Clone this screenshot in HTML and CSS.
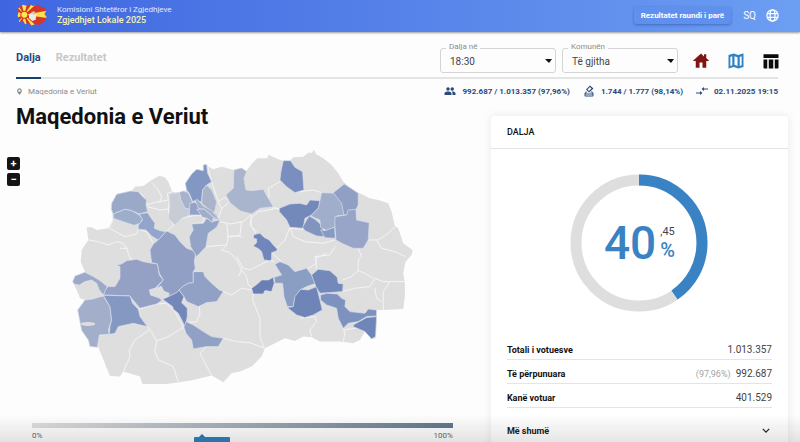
FILE: index.html
```html
<!DOCTYPE html>
<html lang="sq">
<head>
<meta charset="utf-8">
<meta name="viewport" content="width=device-width, initial-scale=1">
<title>Zgjedhjet Lokale 2025</title>
<link rel="stylesheet" href="styles.css">
</head>
<body>
<header class="topbar">
  <svg class="logo" viewBox="0 0 90 66" aria-hidden="true">
    <defs><clipPath id="blob"><path d="M8 8 18 2 29 5 38 1 48 6 61 2 72 9 83 13 87 23 82 30 89 38 85 49 75 57 67 63 55 60 43 65 35 58 24 61 20 52 6 55 7 43 1 36 5 24 2 16Z"/></clipPath></defs>
    <g clip-path="url(#blob)">
      <path fill="#d9342b" d="M0 0h90v66H0z"/>
      <path fill="#f8e34b" d="M22 32 0 22v20zM22 32 14 0H30zM22 32 14 66H30zM22 32 0 0v9zM22 32 0 66v-9zM22 32 44 0h14zM22 32 44 66h14zM22 32 90 20v22z"/>
      <circle cx="22" cy="32" r="12" fill="#d9342b"/><circle cx="22" cy="32" r="9" fill="#fae94d"/>
      <path fill="#d9342b" d="m67 2 18 12-8 4-18-9zM62 52l19-10 5 8-20 12z"/>
    </g>
    <path fill="#eceae5" d="m36 31 13-6 9 6-2 16-10 4-10-9z"/>
    <path fill="#e7bb91" d="m42 25 9-4 6 8-7 3z"/>
  </svg>
  <div class="brand"><span>Komisioni Shtetëror i Zgjedhjeve</span><strong>Zgjedhjet Lokale 2025</strong></div>
  <button class="round" type="button">Rezultatet raundi i parë</button>
  <button class="lang" type="button">SQ
    <svg viewBox="0 0 24 24" fill="none" stroke="currentColor" stroke-width="2" aria-hidden="true"><circle cx="12" cy="12" r="9"/><ellipse cx="12" cy="12" rx="4" ry="9"/><path d="M4 9h16M4 15h16"/></svg>
  </button>
</header>
<main>
  <div class="toolbar">
    <nav class="tabs"><a class="tab active" href="#dalja">Dalja</a><a class="tab" href="#rezultatet">Rezultatet</a></nav>
    <div class="filters">
      <div class="field"><label for="time">Dalja në</label><select id="time"><option>18:30</option></select><svg viewBox="0 0 10 5" aria-hidden="true"><path d="M2 0h7L6 4z"/></svg></div>
      <div class="field"><label for="town">Komunën</label><select id="town"><option>Të gjitha</option></select><svg viewBox="0 0 10 5" aria-hidden="true"><path d="M2 0h7L6 4z"/></svg></div>
      <div class="views">
        <a class="home" href="#home" aria-label="Ballina"><svg viewBox="0 0 24 24"><path d="M10 21v-7h4v7h5v-9h4L19 8V3h-3v3L12 2 1 12h4v9z"/></svg></a>
        <a class="map-link" href="#map" aria-label="Harta"><svg viewBox="0 0 24 24"><path fill-rule="evenodd" d="M21 2 15 4 9 2 2 4v18l7-2 6 2 7-2V2zM7 17.500l-2.500 1V6.500l2.500-1zm7 1L10 17V5.500L14 7zm5.500-1-2.500 1V6.500l2.500-1z"/></svg></a>
        <a class="table-link" href="#table" aria-label="Tabela"><svg viewBox="0 0 24 24"><path d="M2 3h20v5H2zM2 10h5v12H3q-1 0-1-1zM9 10h6v12H9zM17 10h5v11q0 1-1 1h-4z"/></svg></a>
      </div>
    </div>
  </div>
  <div class="status">
    <span class="place"><svg viewBox="0 0 24 24" aria-hidden="true"><path fill-rule="evenodd" d="M12 1C7.500 1 4 4.500 4 9c0 6 8 14 8 14s8-8 8-14c0-4.500-3.500-8-8-8zm0 4a4 4 0 1 1 0 8 4 4 0 0 1 0-8z"/></svg>Maqedonia e Veriut</span>
    <span class="stat"><svg viewBox="0 0 24 24" aria-hidden="true"><circle cx="8" cy="8" r="3.500"/><circle cx="16.500" cy="8" r="3.500"/><path d="M1 20v-3c0-3 4-4 7-4s7 1 7 4v3zM17 20v-3c0-2-.7-3-2-4 4-.2 8 1 8 4v3z"/></svg>992.687 / 1.013.357 (97,96%)</span>
    <span class="stat"><svg viewBox="0 0 24 24" aria-hidden="true"><path fill-rule="evenodd" d="M18 13h-1.500l-2 2h3l1.700 2H4.800l1.800-2h2L7 13H6l-3 3.500V21q0 2 2 2h14q2 0 2-2v-4.500zM14 1l7 6-9 8-6-6zm0 3L9 9l3 3 5-5zM5 19h14v2H5z"/></svg>1.744 / 1.777 (98,14%)</span>
    <span class="stat"><svg viewBox="0 0 24 24" aria-hidden="true"><path d="M8 12l5 4-5 4v-3H0v-2h8zM16 4v3h8v2h-8v3l-5-4z"/></svg>02.11.2025 19:15</span>
  </div>
  <div class="content">
    <section class="map-panel">
      <h1>Maqedonia e Veriut</h1>
      <div class="zoom"><button type="button" aria-label="Zmadho">+</button><button type="button" aria-label="Zvogëlo">−</button></div>
      <svg class="map" viewBox="-84 0 1263 750" role="img" aria-label="Harta e komunave">
        <path class="land" d="M80 262 95 262 110 270 145 265 158 240 158 228 154 208 155 190 170 163 180 160 213 155 225 140 250 138 275 120 298 107 315 112 325 125 337 155 350 158 370 153 380 150 376 130 395 102 410 88 430 92 430 75 440 73 445 80 460 88 485 80 510 87 522 90 545 84 560 92 575 72 592 55 622 55 625 44 655 58 670 62 690 62 700 52 730 50 745 38 756 38 762 29 768 42 790 55 815 75 835 100 850 125 870 142 896 158 930 175 955 180 985 190 995 215 1005 258 1015 265 1030 310 1058 330 1055 345 1037 365 1030 400 1035 430 1035 470 1030 507 970 510 950 510 950 545 947 595 935 597 915 575 900 600 880 610 840 605 780 605 755 592 730 590 705 603 675 595 615 625 605 650 575 680 540 695 515 700 490 727 455 707 400 720 355 728 320 732 247 732 240 710 190 695 180 710 150 708 115 622 90 620 85 600 65 572 53 510 75 480 60 475 52 455 38 425 45 408 75 395 62 365 65 330 85 300z"/>
        <g class="borders">
          <path d="M213 155 240 157 258 180 262 195 285 187 300 185 305 170 295 150 275 128M300 185 325 180 322 160 337 155M262 200 300 210 325 207 328 180M325 207 328 235 342 255 320 273M342 255 365 235 400 227 430 227 432 248 395 252M85 300 115 305 145 315 170 305 190 310 200 325 210 355 235 365M158 240 148 265 195 290 230 282 235 268M235 268 260 275 280 310M180 325 205 325"/>
          <path d="M443 80 455 125 475 185 495 172 510 185M523 92 525 120 520 145M475 185 485 205 475 235M485 205 510 185M480 245 510 252 550 245 575 222M500 250 505 290 500 315 438 320M500 290 520 287 545 290M500 315 485 330 510 338 530 360 545 390 535 410M408 335 438 320M575 225 570 255 590 275M545 245 540 285 510 292M635 205 658 205M625 145 660 125M625 145 628 165 620 185M705 157 760 150 785 158M658 210 640 200M640 208 595 215 573 235 575 260 588 282M690 262 675 300 650 325M692 265 700 290 735 305 790 310 825 300M692 265 730 268"/>
          <path d="M635 338 665 365M530 350 550 385 570 390 630 360M545 390 560 410 565 435 580 445M580 462 578 480 600 535 600 590 613 625M490 455 515 465 545 445 575 450M490 595 530 605 570 608 613 625M235 508 265 500 290 492 320 490 345 515 370 562 325 590 290 603 270 568 262 560M268 570 225 600 208 630 210 650 190 695M290 603 285 635 295 660 340 680 355 728M370 562 378 580M440 620 420 640 430 660 455 707M378 485 400 485 418 500 420 520 410 545 385 548M148 583 118 585M720 535 765 530 770 545 750 570 755 590M850 565 855 580 850 605M888 565 850 570M645 365 620 360M740 385 745 410M745 385 770 370 765 350 810 345 825 320M770 388 768 355 800 340M848 420 875 410 895 392 895 360 905 350 895 325M848 455 885 445 930 440 945 415 970 425 990 425M895 392 915 400 940 415M990 425 970 455 970 510M925 300 955 300 985 280 1005 260M950 300 965 325 1005 335 1037 350M990 425 1035 425M945 445 950 475 965 485M400 395 430 395M270 450 300 440 322 460"/>
        </g>
        <g class="regions">
          <path fill="#9ba9c8" d="M155 190 170 163 182 160 212 153 235 155 250 172 260 180 258 195 263 215 238 222 215 212 195 208 160 222 154 208z"/>
          <path fill="#9daeca" d="M160 222 195 208 215 212 238 225 248 238 240 250 222 256 190 245 160 235z"/>
          <path fill="#94a5cb" d="M238 222 263 218 272 232 285 250 283 265 300 272 318 275 295 300 275 288 258 270 235 268 235 256 248 240z"/>
          <path fill="#919fc5" d="M295 300 320 273 345 285 360 305 380 325 408 335 403 365 406 385 400 395 400 428 385 430 368 440 353 458 327 470 322 460 290 445 310 420 298 400 292 372 275 368 270 330 280 312z"/>
          <path fill="#94a1c5" d="M170 375 185 372 200 362 230 358 250 365 275 370 292 372 298 405 310 420 285 445 268 450 272 465 300 475 305 482 290 492 240 505 215 475 210 468 130 465 135 450 145 440 165 440 180 415 180 380z"/>
          <path class="plain" d="M270 449 290 446 304 438 312 454 328 460 326 467 305 475 282 467 272 465z"/>
          <path fill="#9baac8" d="M38 425 45 408 75 397 100 410 120 422 142 440 130 465 118 450 110 430 95 420 75 425 58 435 42 432z"/>
          <path fill="#a3afca" d="M75 480 95 478 130 468 150 500 155 540 145 570 148 583 118 585 112 622 90 620 85 600 65 572 53 510z"/>
          <path fill="#8498c2" d="M130 466 210 468 218 490 235 508 240 530 262 560 220 550 175 560 165 580 148 583 150 560 155 540 150 500z"/>
          <path fill="#7387b9" d="M308 478 330 468 352 457 357 450 372 470 365 488 382 505 382 530 375 562 368 545 355 520 340 508 338 500z"/>
          <path fill="#90a1c5" d="M400 395 430 395 435 410 455 430 478 450 490 455 480 470 470 485 440 488 415 500 380 485 372 470 357 450 370 438 385 430 400 428z"/>
          <path fill="#90a1c5" d="M378 545 400 555 430 575 455 590 490 595 475 620 440 620 400 627 395 600 378 580 372 562z"/>
          <path fill="#8397c3" d="M376 130 395 102 410 88 430 92 430 75 440 73 443 100 455 125 440 135 428 150 425 185 405 182 398 185 388 160 380 150z"/>
          <path fill="#c7ccd5" d="M328 162 358 157 362 175 375 205 390 207 388 225 365 235 345 255 325 235 330 200z"/>
          <path fill="#a8b3cb" d="M358 157 370 153 385 158 397 185 390 207 375 205 362 178z"/>
          <path fill="#a9b4ca" d="M440 135 455 150 470 185 465 210 460 220 425 190 428 150z"/>
          <path fill="#93a2c6" d="M390 190 405 187 415 193 440 205 470 225 478 240 460 235 430 225 388 225z"/>
          <path fill="#a4b1cb" d="M405 182 412 178 430 198 455 212 477 237 463 232 435 208 415 205 410 190z"/>
          <path fill="#93a4c7" d="M395 252 430 250 440 235 455 245 480 240 470 262 445 280 438 320 410 350 392 320 388 290 400 270z"/>
          <path fill="#a1aeca" d="M410 208 433 208 460 232 457 248 442 235 428 232z"/>
          <path fill="#a8b5cc" d="M522 90 545 84 560 95 552 115 558 150 580 152 610 148 625 175 640 200 600 205 575 222 540 212 510 188 498 165 520 145z"/>
          <path fill="#7a8fbf" d="M670 62 692 62 705 82 728 95 732 150 705 158 680 140 660 120 663 95z"/>
          <path fill="#7389ba" d="M658 205 690 192 720 190 740 195 750 180 780 182 780 200 755 225 735 235 730 265 690 262 680 240 658 215z"/>
          <path fill="#8094bf" d="M748 228 765 238 785 255 795 290 770 288 735 272 728 262 740 240z"/>
          <path fill="#a0aecb" d="M785 158 830 160 845 185 855 225 830 228 825 262 800 272 782 262 780 240 752 228 775 205z"/>
          <path fill="#909fc4" d="M820 158 853 132 895 160 895 195 888 210 865 225 852 225 845 190z"/>
          <path fill="#98a5c8" d="M825 230 860 225 865 210 888 208 890 240 928 248 925 300 910 325 880 325 850 312 828 300 825 260z"/>
          <path fill="#869ac3" d="M782 270 795 272 824 262 826 295 795 293z"/>
          <path fill="#7187bc" d="M582 284 600 280 612 292 628 300 640 315 652 327 650 333 635 338 635 358 630 362 612 360 605 335 598 328 580 318 590 308 590 297 580 295z"/>
          <path fill="#6a80b5" d="M575 445 595 430 605 420 625 420 640 412 643 430 635 455 615 452 610 462 580 462z"/>
          <path fill="#8a9dc3" d="M645 373 660 365 685 375 705 395 740 385 755 405 768 430 740 440 720 450 705 475 700 500 682 500 672 470 668 430 645 430 643 412 665 405z"/>
          <path fill="#6f85b8" d="M682 503 700 500 705 470 722 448 745 450 770 440 780 480 787 510 760 525 735 533 710 525z"/>
          <path fill="#7389ba" d="M755 405 775 388 810 392 832 412 835 430 850 432 848 455 780 460 768 440z"/>
          <path fill="#7d92bf" d="M782 465 800 460 832 462 845 475 857 480 855 500 870 515 915 520 925 507 950 510 950 528 920 530 895 545 865 550 850 565 835 535 830 505 800 495 782 480z"/>
          <path fill="#6f86b9" d="M880 555 920 533 950 530 947 590 935 597 915 575 880 560z"/>
        </g>
        <ellipse class="lake" cx="84" cy="552" rx="22" ry="6"/>
      </svg>
      <div class="scale"><div class="bar"></div><span>0%</span><span>100%</span><div class="marker" style="left:40.45%">40.45%</div></div>
    </section>
    <section class="card">
      <h2>DALJA</h2>
      <div class="chart">
        <svg viewBox="0 0 138 138" aria-hidden="true"><circle class="track" cx="69" cy="69" r="63"/><circle class="value" cx="69" cy="69" r="63" pathLength="100" transform="rotate(-90 69 69)"/></svg>
        <div class="percent"><b>40</b><div><small>,45</small><i>%</i></div></div>
      </div>
      <dl>
        <div><dt>Totali i votuesve</dt><dd>1.013.357</dd></div>
        <div><dt>Të përpunuara</dt><dd><em>(97,96%)</em>992.687</dd></div>
        <div><dt>Kanë votuar</dt><dd>401.529</dd></div>
      </dl>
      <button class="more" type="button">Më shumë<svg viewBox="0 0 10 6" fill="none" stroke="currentColor" stroke-width="1.500" aria-hidden="true"><path d="m1 1 4 4 4-4"/></svg></button>
    </section>
  </div>
</main>
</body>
</html>
```
FILE: styles.css
```css
* { box-sizing: border-box; }
body { margin: 0; height: 100vh; overflow: hidden; background: #fdfdfd; color: #111; font-family: Roboto, "Liberation Sans", sans-serif; font-size: 10px; }
body::after { content: ""; position: fixed; inset: auto 0 0; height: 28px; background: linear-gradient(transparent, rgba(0, 0, 0, .1)); pointer-events: none; }
button, select { font: inherit; }
button { border: 0; padding: 0; cursor: pointer; }
a { text-decoration: none; }
svg { display: block; fill: currentColor; }

.topbar { display: flex; align-items: center; height: 32px; padding: 0 20px 2px 17px; color: #fff; background: linear-gradient(90deg, #3f66e0, #6c9ef2); box-shadow: 0 1px 2px rgba(0, 0, 0, .4); }
.logo { width: 30px; height: 22px; margin-right: 10px; }
.brand { display: flex; flex-direction: column; margin-right: auto; font-size: 8px; line-height: 10px; color: #e3eafc; }
.brand strong { font-size: 9px; font-weight: 500; color: #f4f3b4; }
.round { height: 17px; padding: 0 7px; border-radius: 3px; background: #6090ed; color: #fff; font-size: 8px; font-weight: 700; box-shadow: 0 1px 3px rgba(20, 50, 130, .45); }
.lang { display: flex; align-items: center; gap: 9px; margin-left: 12px; background: none; color: #fff; font-size: 10px; }
.lang svg { width: 15px; height: 15px; fill: none; }

.toolbar { display: flex; justify-content: space-between; height: 47px; margin: 0 22px 0 16px; border-bottom: 2px solid #e4e4e4; }
.tabs { display: flex; gap: 15px; }
.tab { height: 47px; padding-top: 18px; font-size: 11px; line-height: 16px; font-weight: 700; color: #c7c7c7; border-bottom: 2px solid transparent; }
.tab.active { color: #294a7d; border-color: #17406f; }
.filters { display: flex; gap: 6px; padding-top: 16px; }
.field { position: relative; width: 116px; height: 25px; }
.field label { position: absolute; left: 6px; top: -7px; padding: 0 3px; background: #fdfdfd; color: #8c8c8c; font-size: 8px; line-height: 12px; }
.field select { width: 100%; height: 100%; padding: 2px 9px 0; border: 1px solid #d4d4d4; border-radius: 3px; background: transparent; color: #444; appearance: none; }
.field svg { position: absolute; right: 3px; top: 11px; width: 10px; height: 5px; color: #111; pointer-events: none; }
.views { display: flex; gap: 17px; align-items: center; height: 25px; margin: 0 -2px 0 8px; }
.views svg { width: 18px; height: 18px; }
.home { color: #801414; }
.map-link { color: #3182c4; }
.table-link { color: #0b0b0b; }

.status { display: flex; align-items: center; gap: 13px; height: 24px; margin: 0 22px 0 16px; font-size: 8px; }
.status span { display: flex; align-items: center; gap: 6px; }
.status svg { width: 12px; height: 12px; }
.status .place { margin-right: auto; gap: 5px; color: #8a8a8a; }
.status .place svg { width: 7px; height: 9px; }
.stat { color: #294a7b; font-weight: 700; }

.content { display: grid; grid-template-columns: 17fr 12fr; gap: 38px; padding: 0 12px 0 32px; }
.map-panel { position: relative; }
h1 { margin: 0 0 0 -16px; font-size: 22px; line-height: 28px; font-weight: 700; }
.zoom { position: absolute; left: -25px; top: 54px; display: grid; gap: 3px; }
.zoom button { width: 13px; height: 13px; border-radius: 2px; background: #151515; color: #fff; font-size: 11px; font-weight: 700; line-height: 13px; }
.map { width: 100%; margin-top: 9px; }
.land, .lake, .plain { fill: #dedede; }
.borders { fill: none; stroke: #f4f4f4; stroke-width: 3; stroke-linejoin: round; }
.regions { stroke: #d9e0ec; stroke-width: 2; stroke-linejoin: round; }
.scale { position: relative; display: flex; justify-content: space-between; flex-wrap: wrap; margin-top: 33px; font-size: 8px; line-height: 16px; color: #666; }
.bar { width: 100%; height: 5px; background: linear-gradient(90deg, #dedede, #62788f); }
.marker { position: absolute; top: 14px; width: 36px; margin-left: -8px; background: #3182bd; color: #c5d8e8; text-align: center; border-radius: 1px; }
.marker::before { content: ""; position: absolute; left: 5px; top: -3px; border: solid transparent; border-width: 0 3px 3px; border-bottom-color: #2876b0; }

.card { margin-top: 13px; border-radius: 4px; background: #fff; box-shadow: 0 0 10px rgba(0, 0, 0, .09); }
.card h2 { margin: 0; padding: 0 16px; font-size: 9px; line-height: 32px; font-weight: 500; border-bottom: 1px solid #e4e4e4; }
.chart { display: grid; place-items: center; padding: 25px 0 24px; }
.chart > * { grid-area: 1 / 1; }
.chart svg { width: 138px; height: 138px; fill: none; stroke-width: 11; }
.track { stroke: #dedede; }
.value { stroke: #3983c4; stroke-dasharray: 40.45 59.55; }
.percent { display: flex; align-items: center; gap: 4px; color: #3983c4; }
.percent b { font-size: 46px; line-height: 46px; font-weight: 500; }
.percent div { display: flex; flex-direction: column; padding-bottom: 3px; }
.percent small { color: #444; font-size: 11px; line-height: 16px; }
.percent i { font-size: 20px; line-height: 20px; font-style: normal; font-weight: 500; }
dl { margin: 0 16px; }
dl div { display: flex; align-items: center; justify-content: space-between; height: 24px; padding-top: 4px; border-bottom: 1px solid #e4e4e4; }
dt { font-size: 9px; font-weight: 700; }
dd { margin: 0; color: #444; font-size: 10px; }
dd em { margin-right: 5px; color: #a3a3a3; font-size: 9px; font-style: normal; }
.more { display: flex; align-items: center; justify-content: space-between; width: 100%; height: 45px; padding: 0 18px 0 16px; background: none; color: #222; font-size: 9px; font-weight: 700; }
.more svg { width: 8px; height: 5px; fill: none; }
```
